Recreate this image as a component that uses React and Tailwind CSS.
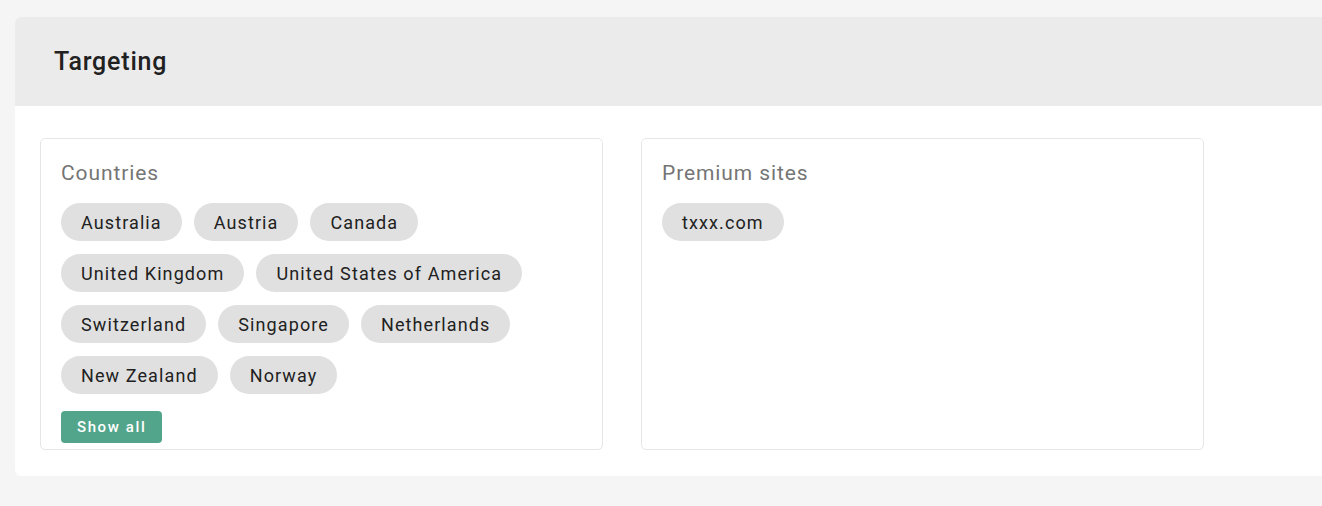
import React from 'react';

const countries = [
  'Australia',
  'Austria',
  'Canada',
  'United Kingdom',
  'United States of America',
  'Switzerland',
  'Singapore',
  'Netherlands',
  'New Zealand',
  'Norway',
];

function Chip({ children }) {
  return (
    <span className="inline-flex items-center h-[38px] px-[20px] rounded-full bg-[#e0e0e0] text-[18px] tracking-[1.1px] text-[#212121]">
      {children}
    </span>
  );
}

function Panel({ title, children }) {
  return (
    <div className="border border-[#e6e6e6] rounded-[5px] pt-[22px] pl-[20px] pr-[20px] pb-[6px] flex flex-col">
      <div className="text-[21px] leading-[24px] text-[#757575] tracking-[0.9px]">{title}</div>
      {children}
    </div>
  );
}

export default function App() {
  return (
    <div
      className="min-h-screen bg-[#f5f5f5] overflow-hidden pt-[17px] pl-[15px]"
      style={{ fontFamily: 'Roboto, "Noto Sans", sans-serif' }}
    >
      <div className="w-[1340px] rounded-tl-[6px] rounded-bl-[6px] overflow-hidden bg-white">
        <div className="h-[89px] bg-[#ebebeb] flex items-center pl-[39px]">
          <h2 className="text-[25px] font-medium text-[#212121] tracking-[0.8px]">Targeting</h2>
        </div>
        <div className="pt-[32px] pb-[26px] pl-[25px] grid grid-cols-[563px_563px] gap-[38px]">
          <Panel title="Countries">
            <div className="mt-[18px] flex flex-wrap gap-x-[12px] gap-y-[13px]">
              {countries.map((c) => (
                <Chip key={c}>{c}</Chip>
              ))}
            </div>
            <div className="mt-[17px]">
              <button className="h-[32px] px-[16px] rounded-[4px] bg-[#52a58a] text-white text-[15px] font-medium tracking-[1.6px]">
                Show all
              </button>
            </div>
          </Panel>
          <Panel title="Premium sites">
            <div className="mt-[18px] flex flex-wrap gap-[12px]">
              <Chip>txxx.com</Chip>
            </div>
          </Panel>
        </div>
      </div>
    </div>
  );
}
